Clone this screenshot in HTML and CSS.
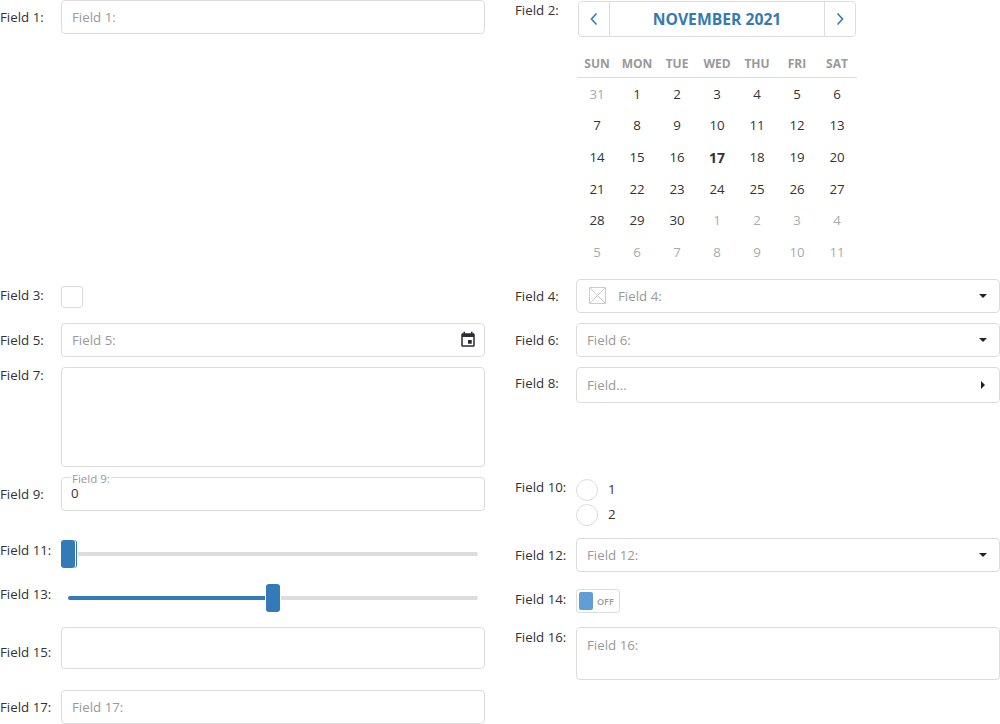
FILE: index.html
```html
<!DOCTYPE html>
<html lang="en">
<head>
    <meta charset="UTF-8">
    <meta name="viewport" content="width=device-width, initial-scale=1.0">
    <title>Form Fields</title>
    <link rel="stylesheet" href="styles.css">
</head>
<body>
    <form class="form">
        <div class="field">
            <label class="label">Field 1:</label>
            <input class="input" type="text" placeholder="Field 1:">
        </div>
        <div class="field">
            <label class="label label-high">Field 2:</label>
            <div class="calendar">
                <div class="cal-nav">
                    <button class="cal-btn" type="button">
                        <svg width="10" height="14" viewBox="0 0 10 14"><path d="M7.5 1.5 2.5 7l5 5.5" fill="none" stroke="#337ab7" stroke-width="1.6"/></svg>
                    </button>
                    <div class="cal-title">NOVEMBER 2021</div>
                    <button class="cal-btn" type="button">
                        <svg width="10" height="14" viewBox="0 0 10 14"><path d="M2.5 1.5 7.5 7l-5 5.5" fill="none" stroke="#337ab7" stroke-width="1.6"/></svg>
                    </button>
                </div>
                <div class="cal-head">
                    <span>SUN</span><span>MON</span><span>TUE</span><span>WED</span><span>THU</span><span>FRI</span><span>SAT</span>
                </div>
                <div class="cal-days">
                    <span class="muted">31</span><span>1</span><span>2</span><span>3</span><span>4</span><span>5</span><span>6</span>
                    <span>7</span><span>8</span><span>9</span><span>10</span><span>11</span><span>12</span><span>13</span>
                    <span>14</span><span>15</span><span>16</span><span class="today">17</span><span>18</span><span>19</span><span>20</span>
                    <span>21</span><span>22</span><span>23</span><span>24</span><span>25</span><span>26</span><span>27</span>
                    <span>28</span><span>29</span><span>30</span><span class="muted">1</span><span class="muted">2</span><span class="muted">3</span><span class="muted">4</span>
                    <span class="muted">5</span><span class="muted">6</span><span class="muted">7</span><span class="muted">8</span><span class="muted">9</span><span class="muted">10</span><span class="muted">11</span>
                </div>
            </div>
        </div>

        <div class="field">
            <label class="label label-check">Field 3:</label>
            <div class="checkbox"></div>
        </div>
        <div class="field">
            <label class="label">Field 4:</label>
            <div class="input select">
                <svg class="no-image" width="18" height="18" viewBox="0 0 18 18"><path d="M.5.5h16v16H.5zM.5.5l16 16M16.5.5l-16 16" fill="none" stroke="#ccc"/></svg>
                <span class="placeholder">Field 4:</span>
                <i class="caret"></i>
            </div>
        </div>

        <div class="field">
            <label class="label">Field 5:</label>
            <div class="input select">
                <span class="placeholder">Field 5:</span>
                <svg class="date-icon" width="18" height="18" viewBox="0 0 24 24"><path fill="#2b2b33" d="M17 12h-5v5h5v-5zM16 1v2H8V1H6v2H5c-1.11 0-1.99.9-1.99 2L3 19c0 1.1.89 2 2 2h14c1.1 0 2-.9 2-2V5c0-1.1-.9-2-2-2h-1V1h-2zm3 18H5V8h14v11z"/></svg>
            </div>
        </div>
        <div class="field">
            <label class="label">Field 6:</label>
            <div class="input select">
                <span class="placeholder">Field 6:</span>
                <i class="caret"></i>
            </div>
        </div>

        <div class="field">
            <label class="label label-flush">Field 7:</label>
            <textarea class="input area-tall"></textarea>
        </div>
        <div class="field">
            <label class="label label-mid">Field 8:</label>
            <div class="input select tree">
                <span class="placeholder">Field...</span>
                <i class="caret caret-right"></i>
            </div>
        </div>

        <div class="field">
            <label class="label">Field 9:</label>
            <div class="input floating">
                <span class="legend">Field 9:</span>
                <span>0</span>
            </div>
        </div>
        <div class="field">
            <label class="label label-high">Field 10:</label>
            <div class="radios">
                <div class="radio-row"><span class="radio"></span><span class="radio-text">1</span></div>
                <div class="radio-row"><span class="radio"></span><span class="radio-text">2</span></div>
            </div>
        </div>

        <div class="field">
            <label class="label label-slider">Field 11:</label>
            <div class="slider">
                <div class="track"></div>
                <div class="handle handle-start"></div>
            </div>
        </div>
        <div class="field">
            <label class="label">Field 12:</label>
            <div class="input select">
                <span class="placeholder">Field 12:</span>
                <i class="caret"></i>
            </div>
        </div>

        <div class="field">
            <label class="label label-slider">Field 13:</label>
            <div class="slider">
                <div class="track"><div class="fill" style="width: 197px"></div></div>
                <div class="handle handle-mid"></div>
            </div>
        </div>
        <div class="field">
            <label class="label label-toggle">Field 14:</label>
            <div class="toggle">
                <span class="knob"></span>
                <span class="toggle-text">OFF</span>
            </div>
        </div>

        <div class="field">
            <label class="label label-lower">Field 15:</label>
            <div class="input box-empty"></div>
        </div>
        <div class="field">
            <label class="label label-high">Field 16:</label>
            <textarea class="input area-short" placeholder="Field 16:"></textarea>
        </div>

        <div class="field">
            <label class="label">Field 17:</label>
            <input class="input" type="text" placeholder="Field 17:">
        </div>
    </form>
</body>
</html>
```

FILE: styles.css
```css
body {
    margin: 0;
    font-family: "Open Sans", sans-serif;
    font-size: 13.3px;
    color: #333;
    background-color: #fff;
}
.form {
    display: grid;
    grid-template-columns: 485px 485px;
    grid-template-rows: 269px 34px 34px 100px 51px 34px 35px 53px 34px;
    column-gap: 30px;
    row-gap: 10px;
}
.field {
    display: flex;
    align-items: flex-start;
}
.label {
    flex: 0 0 61px;
    padding-top: 9px;
    line-height: 16px;
}
.label-flush {
    padding-top: 0;
}
.label-high {
    padding-top: 2px;
}
.label-mid {
    padding-top: 8px;
}
.label-check {
    padding-top: 8px;
}
.label-slider {
    padding-top: 4px;
}
.label-toggle {
    padding-top: 9px;
}
.label-lower {
    padding-top: 17px;
}
.input {
    flex: 1;
    min-width: 0;
    box-sizing: border-box;
    height: 34px;
    padding: 0 10px;
    border: 1px solid #ddd;
    border-radius: 4px;
    background-color: #fff;
    font-family: inherit;
    font-size: 13.3px;
    color: #333;
    outline: none;
}
.input::placeholder,
.placeholder {
    color: #999;
    opacity: 1;
}
textarea.input {
    padding: 8px 10px;
    resize: none;
    line-height: 18px;
}
.area-tall {
    height: 100px;
}
.area-short {
    height: 53px;
}
.box-empty {
    height: 42px;
}
.select {
    display: flex;
    align-items: center;
}
.tree {
    height: 36px;
}
.no-image {
    flex: none;
    margin: 0 11px 0 2px;
}
.caret {
    width: 0;
    height: 0;
    margin-left: auto;
    margin-right: 2px;
    border-left: 4px solid transparent;
    border-right: 4px solid transparent;
    border-top: 4px solid #222;
}
.caret-right {
    margin-right: 4px;
    border-top: 4px solid transparent;
    border-bottom: 4px solid transparent;
    border-left: 4px solid #222;
    border-right: none;
}
.date-icon {
    margin-left: auto;
    margin-right: -3px;
}

/* calendar */
.calendar {
    width: 281px;
}
.cal-nav {
    display: flex;
    box-sizing: border-box;
    width: 278px;
    height: 36px;
    margin: 1px 0 0 2px;
    border: 1px solid #ddd;
    border-radius: 4px;
}
.cal-btn {
    display: flex;
    align-items: center;
    justify-content: center;
    width: 30px;
    padding: 0;
    border: none;
    background: none;
}
.cal-title {
    flex: 1;
    border-left: 1px solid #ddd;
    border-right: 1px solid #ddd;
    text-align: center;
    line-height: 34px;
    font-size: 15.7px;
    font-weight: 700;
    color: #337ab7;
}
.cal-head {
    display: grid;
    grid-template-columns: repeat(7, 40px);
    height: 29px;
    margin: 11px 0 0 1px;
    border-bottom: 1px solid #ddd;
    text-align: center;
    line-height: 31px;
    font-size: 12px;
    font-weight: 700;
    color: #999;
}
.cal-days {
    display: grid;
    grid-template-columns: repeat(7, 40px);
    grid-auto-rows: 31.7px;
    margin-left: 1px;
    padding-top: 0.5px;
    text-align: center;
    line-height: 31.7px;
}
.muted {
    color: #aaa;
}
.today {
    font-weight: 700;
    font-size: 14px;
}

/* misc controls */
.checkbox {
    box-sizing: border-box;
    width: 22px;
    height: 22px;
    margin-top: 7px;
    border: 1px solid #ddd;
    border-radius: 3px;
}
.floating {
    position: relative;
    display: flex;
    align-items: center;
    padding: 0 9px 2px;
}
.legend {
    position: absolute;
    top: -6px;
    left: 9px;
    padding: 0 1px;
    background-color: #fff;
    font-size: 11.5px;
    line-height: 14px;
    color: #999;
}
.radios {
    display: flex;
    flex-direction: column;
    gap: 3px;
    padding-top: 2px;
}
.radio-row {
    display: flex;
    align-items: center;
    gap: 10px;
    height: 22px;
}
.radio {
    box-sizing: border-box;
    width: 22px;
    height: 22px;
    border: 1px solid #ddd;
    border-radius: 50%;
}
.radio-text {
    padding-bottom: 2px;
}
.slider {
    position: relative;
    flex: 1;
    height: 30px;
}
.track {
    position: absolute;
    top: 14px;
    left: 7px;
    right: 7px;
    height: 4px;
    border-radius: 2px;
    background-color: #ddd;
}
.fill {
    height: 100%;
    border-radius: 2px 0 0 2px;
    background-color: #337ab7;
}
.handle {
    position: absolute;
    top: 2px;
    width: 14px;
    height: 28px;
    border-radius: 3px;
    background-color: #337ab7;
    box-shadow: 0 0 0 1px #fff;
}
.handle-start {
    left: 0;
    box-shadow: 1px 0 0 #fff, 2px 0 0 #337ab7, 3px 0 0 #fff;
}
.handle-mid {
    left: 205px;
}
.toggle {
    display: flex;
    align-items: center;
    box-sizing: border-box;
    width: 44px;
    height: 24px;
    margin-top: 7px;
    padding-left: 2px;
    border: 1px solid #ddd;
    border-radius: 3px;
}
.knob {
    width: 14px;
    height: 18px;
    border-radius: 2px;
    background-color: #5f9fd6;
}
.toggle-text {
    margin-left: 4px;
    font-size: 9px;
    font-weight: 600;
    color: #999;
}
```
